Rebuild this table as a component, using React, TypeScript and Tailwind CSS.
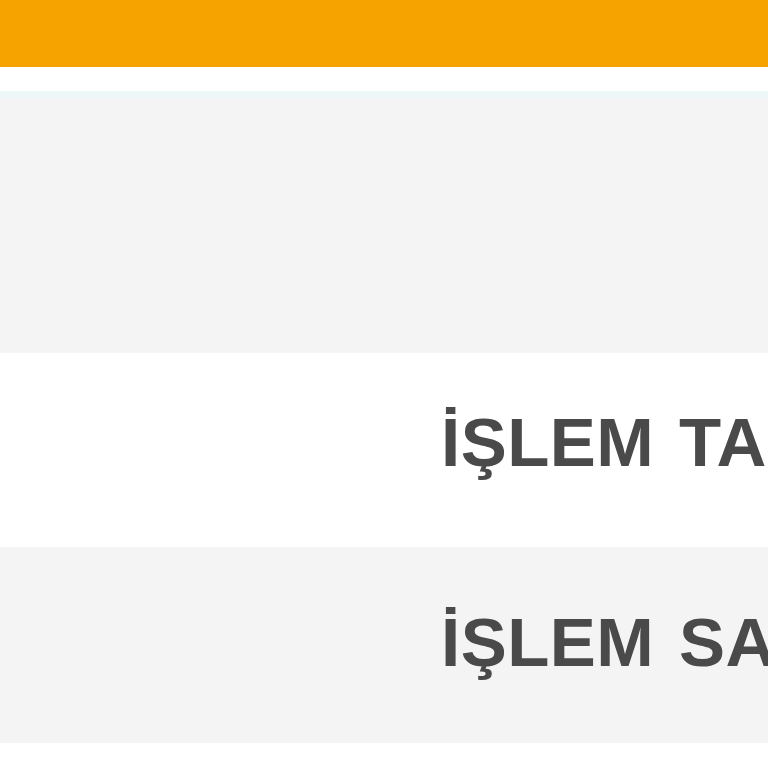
export default function App() {
  return (
    <div className="w-[768px] h-[768px] overflow-hidden bg-white font-['Liberation_Sans',Arial,sans-serif]">
      <div className="h-[67px] bg-[#f6a300] shadow-[0_2px_3px_rgba(120,90,30,0.35)]" />
      <div className="h-[24px] bg-white" />
      <div className="h-[7px] bg-[#eef7f8]" />
      <div className="h-[255px] bg-[#f4f4f4]" />
      <div className="flex flex-col">
        <div className="flex h-[194px] items-center bg-white pl-[441px] pb-[16px]">
          <span className="whitespace-nowrap text-[69px] font-bold leading-none text-[#4a4a4a] tracking-[0.5px] [word-spacing:5px]">İŞLEM TARİHİ</span>
        </div>
        <div className="flex h-[196px] items-center bg-[#f4f4f4] pl-[441px] pb-[6px]">
          <span className="whitespace-nowrap text-[69px] font-bold leading-none text-[#4a4a4a] tracking-[0.5px] [word-spacing:5px]">İŞLEM SAATİ</span>
        </div>
      </div>
    </div>
  );
}
